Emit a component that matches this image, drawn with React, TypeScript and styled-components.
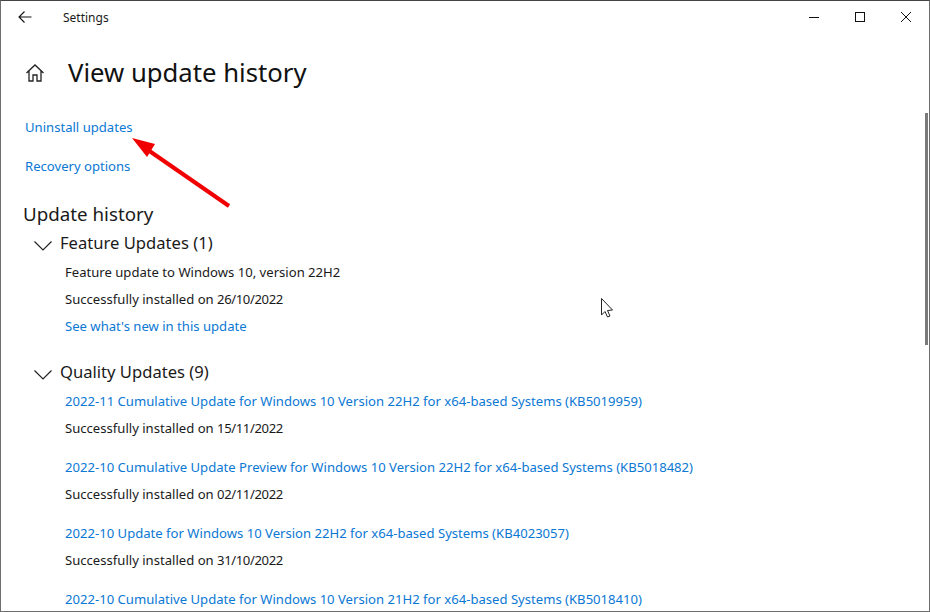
import React, { FC } from 'react';
import styled, { createGlobalStyle } from 'styled-components';

const GlobalStyle = createGlobalStyle`
    html, body {
        margin: 0;
        padding: 0;
        background: #fff;
    }
    * {
        box-sizing: border-box;
    }
`;

const SettingsWindow = styled.div`
    position: relative;
    width: 930px;
    height: 612px;
    overflow: hidden;
    background: #fff;
    border: 1px solid #6e6e6e;
    border-top-color: #444;
    font-family: "Noto Sans", "Open Sans", sans-serif;
    color: #1a1a1a;
`;

const TitleBar = styled.header`
    display: flex;
    align-items: center;
    height: 32px;
    margin-bottom: 20px;
`;

const TitleBarButton = styled.button`
    display: flex;
    align-items: center;
    justify-content: center;
    width: 46px;
    height: 32px;
    padding: 0;
    border: none;
    background: transparent;
    color: #111;
`;

const BackButton = styled(TitleBarButton)`
    width: 48px;
    padding-bottom: 1px;
`;

const WindowTitle = styled.span`
    flex: 1;
    margin-left: 14px;
    padding-top: 1px;
    font-size: 12px;
    line-height: 32px;
`;

const WindowControls = styled.div`
    display: flex;
`;

const Content = styled.main`
    display: flex;
    flex-direction: column;
    align-items: flex-start;
    padding-left: 24px;
`;

const PageHeader = styled.div`
    display: flex;
    align-items: center;
    height: 40px;
    margin-bottom: 25px;
`;

const HomeIcon = styled.svg`
    width: 20px;
    height: 20px;
    margin-right: 23px;
`;

const PageTitle = styled.h1`
    margin: 0;
    font-size: 25.7px;
    font-weight: 400;
    line-height: 40px;
    color: #111;
`;

const TextLink = styled.a`
    display: block;
    color: #0b78d4;
    font-size: 13.1px;
    line-height: 19px;
    white-space: nowrap;
`;

const TopLinks = styled.nav`
    display: flex;
    flex-direction: column;
    gap: 20px;
    margin-bottom: 25px;
`;

const SectionTitle = styled.h2`
    margin: 0 0 3px -2px;
    font-size: 18.75px;
    font-weight: 400;
    line-height: 26px;
    color: #1a1a1a;
`;

const GroupHeader = styled.div`
    display: flex;
    align-items: center;
    height: 26px;
    margin-left: 8px;
`;

const Chevron = styled.svg`
    width: 20px;
    height: 12px;
    margin-right: 7px;
    margin-top: 5px;
`;

const GroupTitle = styled.h3`
    margin: 0;
    font-size: 16.6px;
    font-weight: 400;
    line-height: 26px;
    color: #1a1a1a;
`;

const UpdateList = styled.div`
    display: flex;
    flex-direction: column;
    margin-left: 40px;
`;

const UpdateEntry = styled.div`
    display: flex;
    flex-direction: column;
    gap: 8px;
    padding-top: 7px;
    padding-bottom: 13px;
`;

const FeatureBlock = styled.div`
    display: flex;
    flex-direction: column;
    gap: 8px;
    margin: 7px 0 23px 40px;
`;

const BodyText = styled.span`
    display: block;
    font-size: 13.1px;
    line-height: 19px;
    white-space: nowrap;
`;

const DateText = styled.span`
    letter-spacing: -0.38px;
`;

const Scrollbar = styled.div`
    position: absolute;
    top: 112px;
    right: 1px;
    width: 3px;
    height: 232px;
    background: #7a7a7a;
`;

const Overlay = styled.svg`
    position: absolute;
    top: -1px;
    left: -1px;
    pointer-events: none;
`;

const qualityUpdates = [
    { title: '2022-11 Cumulative Update for Windows 10 Version 22H2 for x64-based Systems (KB5019959)', date: '15/11/2022' },
    { title: '2022-10 Cumulative Update Preview for Windows 10 Version 22H2 for x64-based Systems (KB5018482)', date: '02/11/2022' },
    { title: '2022-10 Update for Windows 10 Version 22H2 for x64-based Systems (KB4023057)', date: '31/10/2022' },
    { title: '2022-10 Cumulative Update for Windows 10 Version 21H2 for x64-based Systems (KB5018410)', date: '' },
];

const ChevronDown: FC = () => (
    <Chevron viewBox="0 0 20 12" fill="none" stroke="#222" strokeWidth="1.2">
        <path d="M1.5 1.5 L10 10 L18.5 1.5" />
    </Chevron>
);

export default function App() {
    return (
        <SettingsWindow>
            <GlobalStyle />
            <TitleBar>
                <BackButton aria-label="Back">
                    <svg width="16" height="14" viewBox="0 0 16 14" fill="none" stroke="#111" strokeWidth="1.1">
                        <path d="M14.5 7 H2 M7.5 1.5 L2 7 L7.5 12.5" />
                    </svg>
                </BackButton>
                <WindowTitle>Settings</WindowTitle>
                <WindowControls>
                    <TitleBarButton aria-label="Minimize">
                        <svg width="10" height="10" viewBox="0 0 10 10" fill="none" stroke="#111" strokeWidth="1">
                            <path d="M0 5.5 H10" />
                        </svg>
                    </TitleBarButton>
                    <TitleBarButton aria-label="Maximize">
                        <svg width="10" height="10" viewBox="0 0 10 10" fill="none" stroke="#111" strokeWidth="1">
                            <rect x="0.5" y="0.5" width="9" height="9" />
                        </svg>
                    </TitleBarButton>
                    <TitleBarButton aria-label="Close">
                        <svg width="10" height="10" viewBox="0 0 10 10" fill="none" stroke="#111" strokeWidth="1">
                            <path d="M0 0 L10 10 M10 0 L0 10" />
                        </svg>
                    </TitleBarButton>
                </WindowControls>
            </TitleBar>
            <Content>
                <PageHeader>
                    <HomeIcon viewBox="0 0 20 20" fill="none" stroke="#222" strokeWidth="1.3">
                        <path d="M1.5 10 L10 2 L18.5 10 M4 8 V18 H8 V12 H12 V18 H16 V8" />
                    </HomeIcon>
                    <PageTitle>View update history</PageTitle>
                </PageHeader>
                <TopLinks>
                    <TextLink>Uninstall updates</TextLink>
                    <TextLink>Recovery options</TextLink>
                </TopLinks>
                <SectionTitle>Update history</SectionTitle>
                <GroupHeader>
                    <ChevronDown />
                    <GroupTitle>Feature Updates (1)</GroupTitle>
                </GroupHeader>
                <FeatureBlock>
                    <BodyText>Feature update to Windows 10, version 22H2</BodyText>
                    <BodyText>Successfully installed on <DateText>26/10/2022</DateText></BodyText>
                    <TextLink>See what's new in this update</TextLink>
                </FeatureBlock>
                <GroupHeader>
                    <ChevronDown />
                    <GroupTitle>Quality Updates (9)</GroupTitle>
                </GroupHeader>
                <UpdateList>
                    {qualityUpdates.map((update) => (
                        <UpdateEntry key={update.title}>
                            <TextLink>{update.title}</TextLink>
                            {update.date && <BodyText>Successfully installed on <DateText>{update.date}</DateText></BodyText>}
                        </UpdateEntry>
                    ))}
                </UpdateList>
            </Content>
            <Scrollbar />
            <Overlay width="930" height="612" viewBox="0 0 930 612">
                <path d="M229 206 L148 150" stroke="#f00000" strokeWidth="4" fill="none" />
                <path d="M132 138 L155 144 L147 157 Z" fill="#f00000" />
                <path d="M601.5 298.5 V315 L605 311.5 L607.5 317 L610 316 L607.5 310.5 L612.5 310 Z" fill="#fff" stroke="#222" strokeWidth="1" />
            </Overlay>
        </SettingsWindow>
    );
}
